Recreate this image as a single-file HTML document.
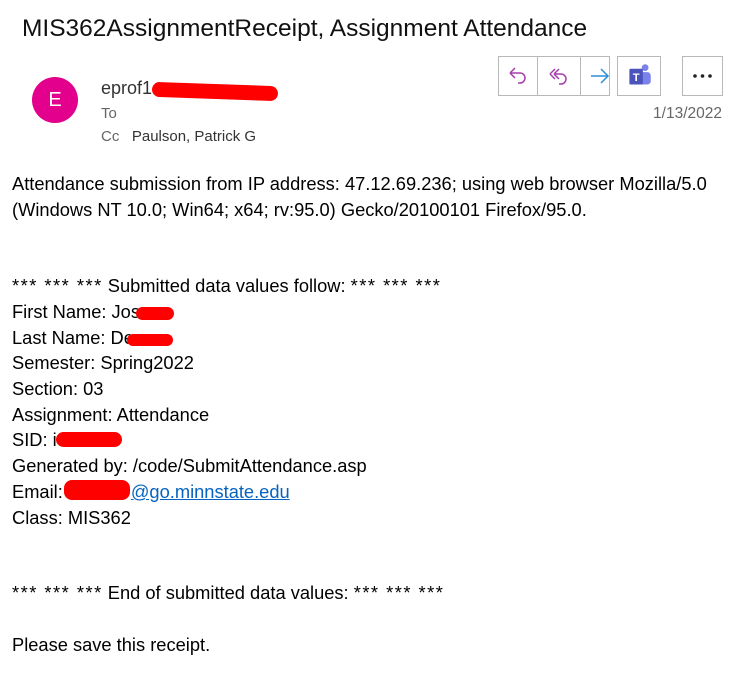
<!DOCTYPE html>
<html><head><style>
body{margin:0;width:731px;height:680px;background:#fff;font-family:"Liberation Sans",sans-serif;color:#000;position:relative;overflow:hidden}
.a{position:absolute;white-space:nowrap}
.t{font-size:18.3px;left:12px;line-height:22px}
.btn{position:absolute;top:56px;height:40px;border:1px solid #b8b8b8;box-sizing:border-box;background:#fff}
.red{position:absolute;background:#f00;border-radius:8px}
.st{letter-spacing:1.5px}
</style></head><body>
<div class="a" style="left:22px;top:15px;font-size:24.5px;color:#111">MIS362AssignmentReceipt, Assignment Attendance</div>
<div class="a" style="left:32px;top:77px;width:46px;height:46px;border-radius:50%;background:#e3008c;color:#fff;font-size:20px;text-align:center;line-height:46px">E</div>
<div class="a" style="left:101px;top:78px;font-size:18px;color:#333">eprof1</div>
<div class="red" style="left:152px;top:84px;width:126px;height:15px;transform:rotate(2deg)"></div>
<div class="a" style="left:101px;top:105px;font-size:15px;color:#666">To</div>
<div class="a" style="left:101px;top:128px;font-size:15px;color:#666">Cc&nbsp;&nbsp;&nbsp;<span style="color:#333">Paulson, Patrick G</span></div>
<div class="a" style="right:9px;top:105px;font-size:15.5px;color:#666">1/13/2022</div>
<div class="btn" style="left:498px;width:112px"></div>
<div class="a" style="left:537px;top:56px;width:1px;height:40px;background:#b8b8b8"></div>
<div class="a" style="left:580px;top:56px;width:1px;height:40px;background:#b8b8b8"></div>
<svg class="a" style="left:506px;top:64px" width="24" height="24" viewBox="0 0 24 24" fill="none" stroke="#a63dac" stroke-width="1.5"><path d="M4 9h10a5 5 0 0 1 0 10h-2M4 9l5-5M4 9l5 5"/></svg>
<svg class="a" style="left:547px;top:64px" width="24" height="24" viewBox="0 0 24 24" fill="none" stroke="#a63dac" stroke-width="1.5"><path d="M7 10h7a5 5 0 0 1 0 10h-2M7 10l5-5M7 10l5 5M3 10l5-5M3 10l5 5"/></svg>
<svg class="a" style="left:588px;top:64px" width="24" height="24" viewBox="0 0 24 24" fill="none" stroke="#2a8fd6" stroke-width="1.5"><path d="M3 12h17M13 5l7 7-7 7"/></svg>
<div class="btn" style="left:617px;width:44px"></div>
<svg class="a" style="left:626px;top:62px" width="27" height="27" viewBox="0 0 24 24"><circle cx="17" cy="5" r="3" fill="#7b83eb"/><rect x="12" y="9" width="10" height="11" rx="3" fill="#7b83eb"/><rect x="3" y="6" width="12" height="14" rx="1" fill="#4b53bc"/><text x="9" y="17" font-size="10" fill="#fff" text-anchor="middle" font-family="Liberation Sans" font-weight="bold">T</text></svg>
<div class="btn" style="left:682px;width:41px"></div>
<svg class="a" style="left:682px;top:56px" width="41" height="40"><circle cx="13" cy="20" r="1.8" fill="#222"/><circle cx="20.5" cy="20" r="1.8" fill="#222"/><circle cx="28" cy="20" r="1.8" fill="#222"/></svg>
<div class="a t" style="top:173px">Attendance submission from IP address: 47.12.69.236; using web browser Mozilla/5.0</div>
<div class="a t" style="top:199px">(Windows NT 10.0; Win64; x64; rv:95.0) Gecko/20100101 Firefox/95.0.</div>
<div class="a t" style="top:275px"><span class="st">*** *** ***</span> Submitted data values follow: <span class="st">*** *** ***</span></div>
<div class="a t" style="top:301px">First Name: Jos</div><div class="red" style="left:136px;top:307px;width:38px;height:13px"></div>
<div class="a t" style="top:327px">Last Name: De</div><div class="red" style="left:127px;top:334px;width:46px;height:12px"></div>
<div class="a t" style="top:352px">Semester: Spring2022</div>
<div class="a t" style="top:378px">Section: 03</div>
<div class="a t" style="top:404px">Assignment: Attendance</div>
<div class="a t" style="top:429px">SID: i</div><div class="red" style="left:56px;top:432px;width:66px;height:15px"></div>
<div class="a t" style="top:455px">Generated by: /code/SubmitAttendance.asp</div>
<div class="a t" style="top:481px">Email: <span style="color:#0563c1;text-decoration:underline;margin-left:63px">@go.minnstate.edu</span></div><div class="red" style="left:64px;top:480px;width:66px;height:20px"></div>
<div class="a t" style="top:507px">Class: MIS362</div>
<div class="a t" style="top:582px"><span class="st">*** *** ***</span> End of submitted data values: <span class="st">*** *** ***</span></div>
<div class="a t" style="top:634px">Please save this receipt.</div>
</body></html>
